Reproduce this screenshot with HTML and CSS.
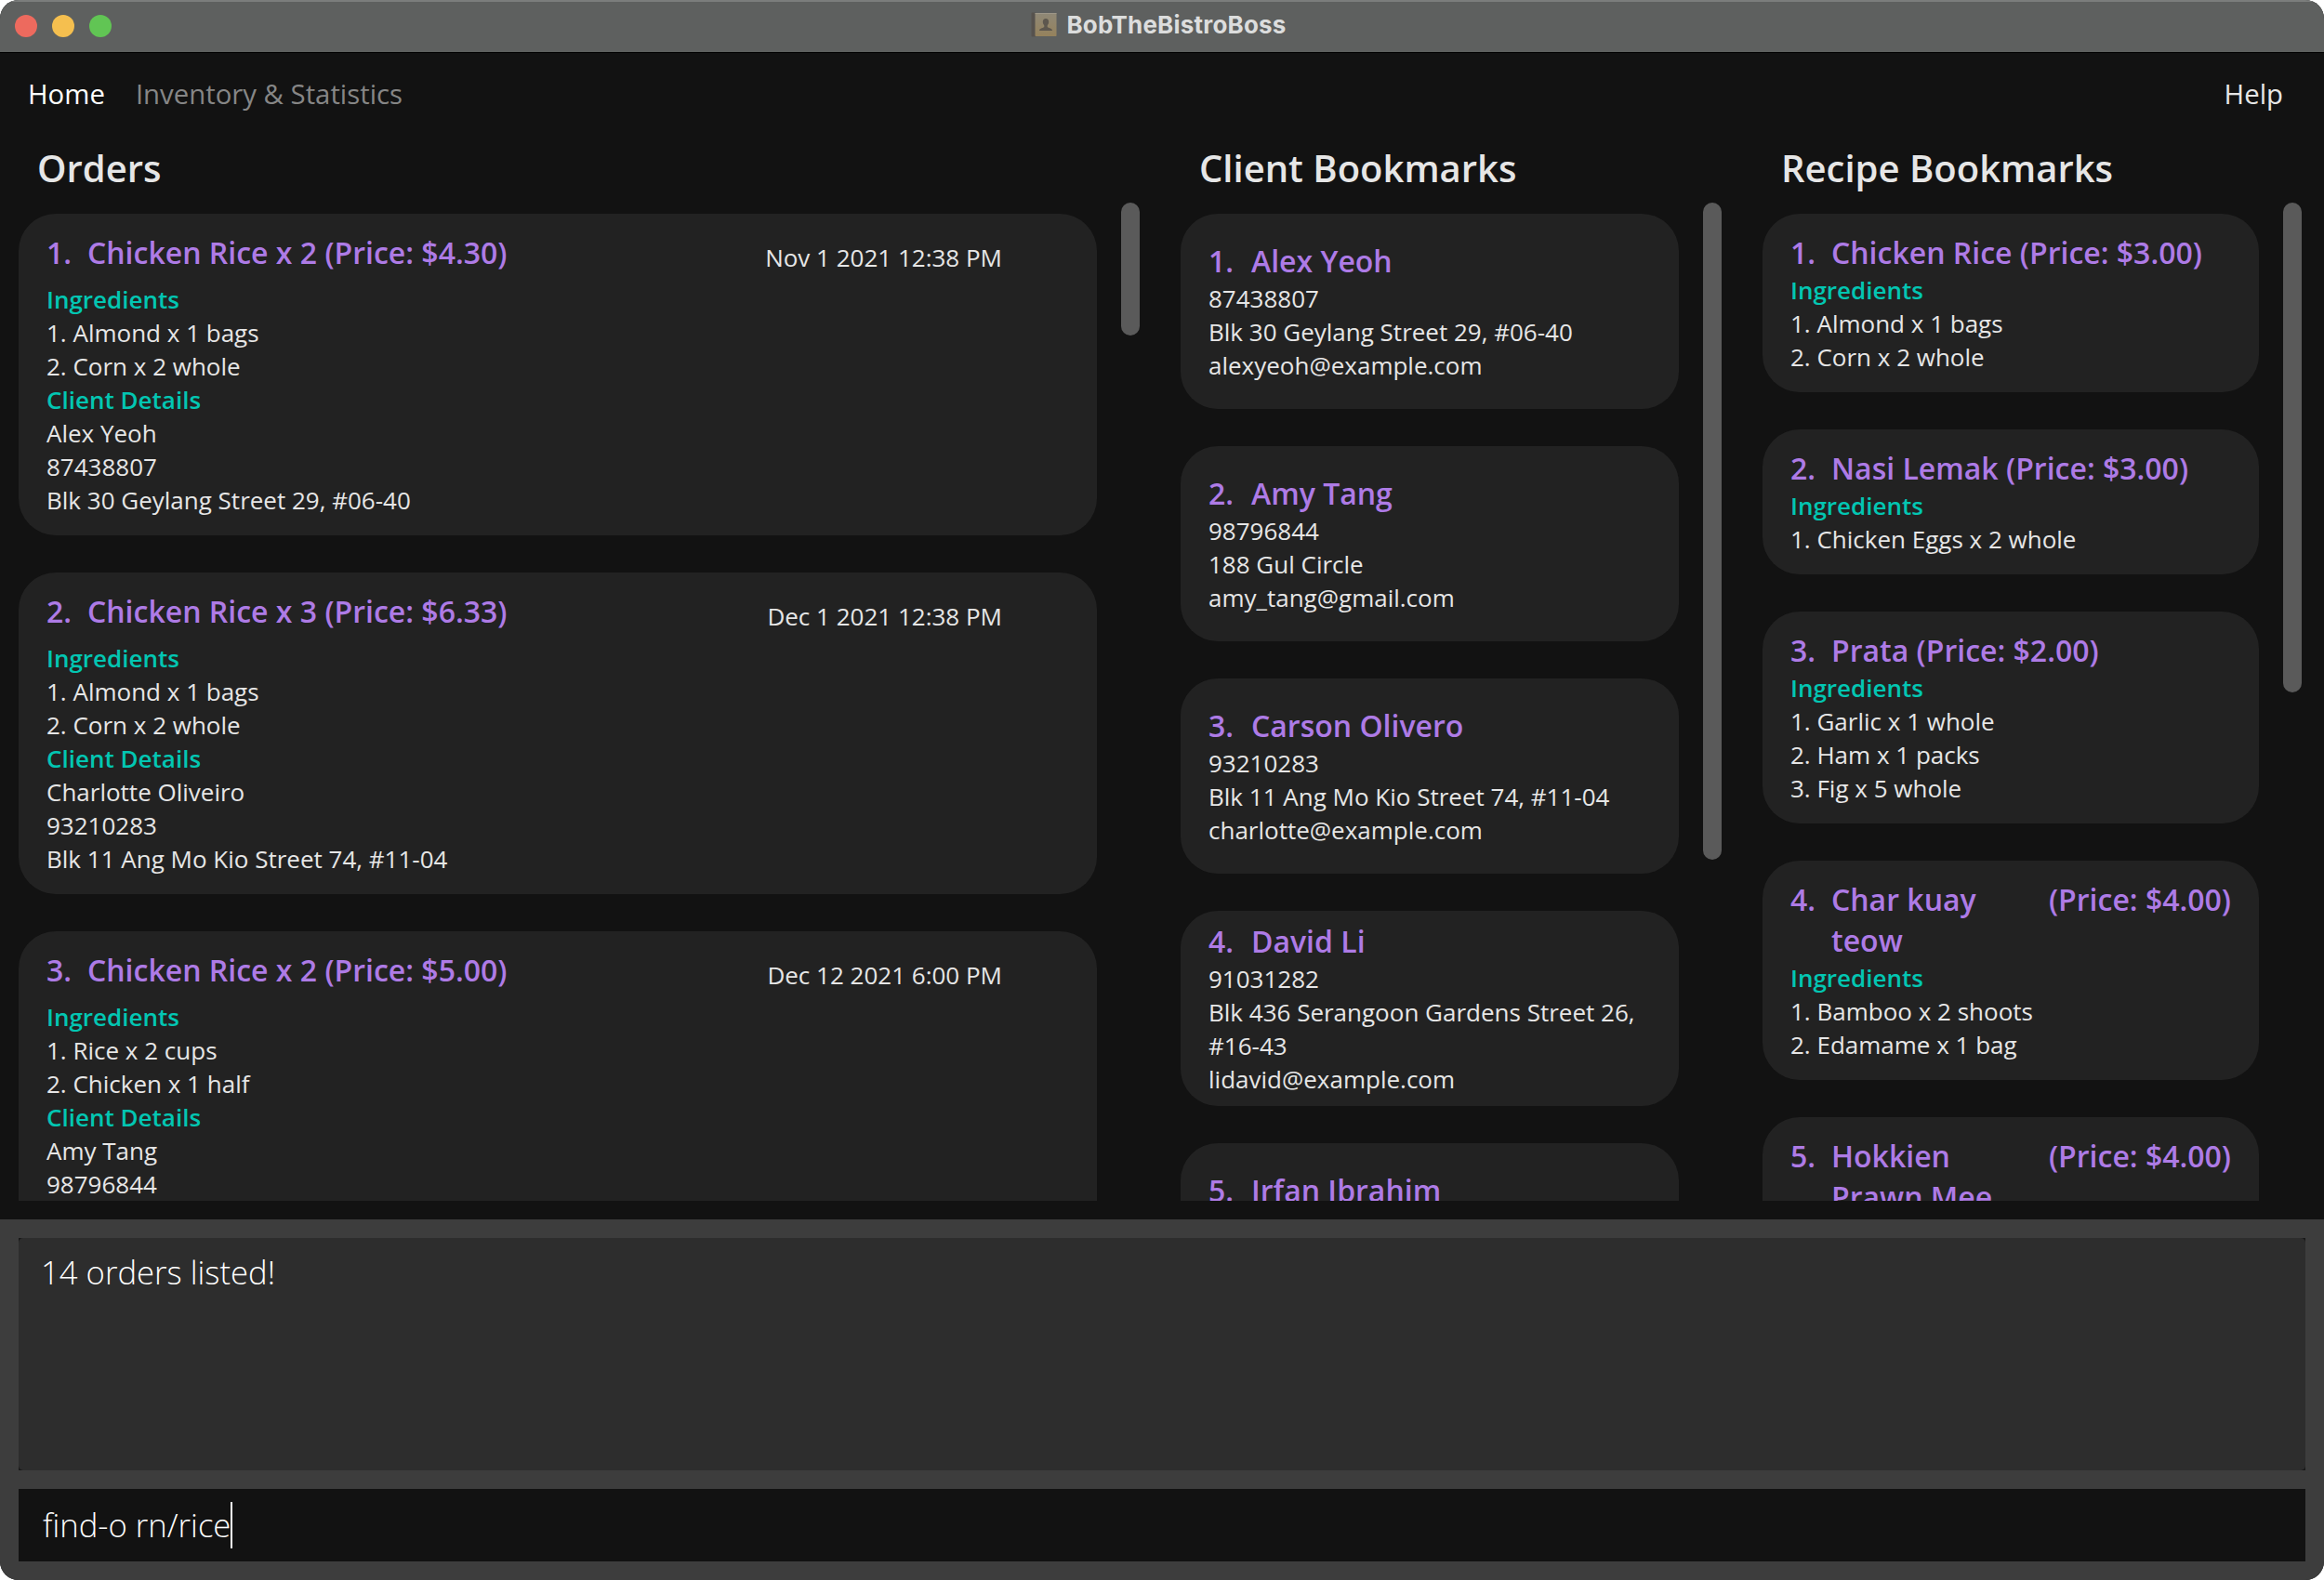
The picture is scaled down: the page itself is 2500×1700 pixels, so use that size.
FILE: index.html
```html
<!DOCTYPE html>
<html lang="en">
<head>
<meta charset="utf-8">
<title>BobTheBistroBoss</title>
<link rel="stylesheet" href="styles.css">
</head>
<body>
<div class="window">
  <header class="titlebar">
    <div class="lights"><span class="light close"></span><span class="light minimise"></span><span class="light maximise"></span></div>
    <div class="app-title">
      <svg class="app-icon" width="28" height="28" viewBox="0 0 28 28">
        <defs>
          <linearGradient id="cover" x1="0" y1="0" x2="0" y2="1"><stop offset="0" stop-color="#8f8877"/><stop offset="1" stop-color="#95825c"/></linearGradient>
        </defs>
        <rect x="0.5" y="0.5" width="5" height="26" rx="1" fill="#56524e"/>
        <rect x="4.5" y="1" width="23" height="25" rx="0.8" fill="url(#cover)"/>
        <rect x="4.5" y="1" width="23" height="1" fill="#9d9788"/>
        <path d="M16 7c2 0 3.200 1.400 3.200 3.600 0 1.700-.8 3-1.500 3.800v1.600c0 .8 5.300 1.200 5.300 4H9c0-2.800 5.300-3.200 5.300-4v-1.600c-.7-.8-1.500-2.100-1.500-3.800C12.800 8.400 14 7 16 7z" fill="#5d574e"/>
      </svg>
      <span>BobTheBistroBoss</span>
    </div>
  </header>

  <nav class="menu">
    <span class="menu-item active">Home</span>
    <span class="menu-item muted">Inventory &amp; Statistics</span>
    <span class="menu-item help">Help</span>
  </nav>

  <main class="content">
    <section class="panel orders">
      <h2>Orders</h2>
      <div class="viewport">
        <div class="list">
          <article class="card">
            <div class="head"><span class="no">1.</span><span class="name">Chicken Rice x 2 (Price: $4.30)</span><span class="date">Nov 1 2021 12:38 PM</span></div>
            <h4>Ingredients</h4><p>1. Almond x 1 bags</p><p>2. Corn x 2 whole</p>
            <h4>Client Details</h4><p>Alex Yeoh</p><p>87438807</p><p>Blk 30 Geylang Street 29, #06-40</p>
          </article>
          <article class="card">
            <div class="head"><span class="no">2.</span><span class="name">Chicken Rice x 3 (Price: $6.33)</span><span class="date">Dec 1 2021 12:38 PM</span></div>
            <h4>Ingredients</h4><p>1. Almond x 1 bags</p><p>2. Corn x 2 whole</p>
            <h4>Client Details</h4><p>Charlotte Oliveiro</p><p>93210283</p><p>Blk 11 Ang Mo Kio Street 74, #11-04</p>
          </article>
          <article class="card">
            <div class="head"><span class="no">3.</span><span class="name">Chicken Rice x 2 (Price: $5.00)</span><span class="date">Dec 12 2021 6:00 PM</span></div>
            <h4>Ingredients</h4><p>1. Rice x 2 cups</p><p>2. Chicken x 1 half</p>
            <h4>Client Details</h4><p>Amy Tang</p><p>98796844</p>
          </article>
        </div>
        <div class="track"><div class="thumb"></div></div>
      </div>
    </section>

    <section class="panel clients">
      <h2>Client Bookmarks</h2>
      <div class="viewport">
        <div class="list">
          <article class="card">
            <div class="head"><span class="no">1.</span><span class="name">Alex Yeoh</span></div>
            <p>87438807</p><p>Blk 30 Geylang Street 29, #06-40</p><p>alexyeoh@example.com</p>
          </article>
          <article class="card">
            <div class="head"><span class="no">2.</span><span class="name">Amy Tang</span></div>
            <p>98796844</p><p>188 Gul Circle</p><p>amy_tang@gmail.com</p>
          </article>
          <article class="card">
            <div class="head"><span class="no">3.</span><span class="name">Carson Olivero</span></div>
            <p>93210283</p><p>Blk 11 Ang Mo Kio Street 74, #11-04</p><p>charlotte@example.com</p>
          </article>
          <article class="card">
            <div class="head"><span class="no">4.</span><span class="name">David Li</span></div>
            <p>91031282</p><p>Blk 436 Serangoon Gardens Street 26, #16-43</p><p>lidavid@example.com</p>
          </article>
          <article class="card partial">
            <div class="head"><span class="no">5.</span><span class="name">Irfan Ibrahim</span></div>
          </article>
        </div>
        <div class="track"><div class="thumb"></div></div>
      </div>
    </section>

    <section class="panel recipes">
      <h2>Recipe Bookmarks</h2>
      <div class="viewport">
        <div class="list">
          <article class="card">
            <div class="head"><span class="no">1.</span><span class="name">Chicken Rice (Price: $3.00)</span></div>
            <h4>Ingredients</h4><p>1. Almond x 1 bags</p><p>2. Corn x 2 whole</p>
          </article>
          <article class="card">
            <div class="head"><span class="no">2.</span><span class="name">Nasi Lemak (Price: $3.00)</span></div>
            <h4>Ingredients</h4><p>1. Chicken Eggs x 2 whole</p>
          </article>
          <article class="card">
            <div class="head"><span class="no">3.</span><span class="name">Prata (Price: $2.00)</span></div>
            <h4>Ingredients</h4><p>1. Garlic x 1 whole</p><p>2. Ham x 1 packs</p><p>3. Fig x 5 whole</p>
          </article>
          <article class="card">
            <div class="head"><span class="no">4.</span><span class="name">Char kuay teow</span><span class="price">(Price: $4.00)</span></div>
            <h4>Ingredients</h4><p>1. Bamboo x 2 shoots</p><p>2. Edamame x 1 bag</p>
          </article>
          <article class="card">
            <div class="head"><span class="no">5.</span><span class="name">Hokkien Prawn Mee</span><span class="price">(Price: $4.00)</span></div>
          </article>
        </div>
        <div class="track"><div class="thumb"></div></div>
      </div>
    </section>
  </main>

  <footer class="console">
    <div class="result-frame"><div class="result">14 orders listed!</div></div>
    <div class="command"><span>find-o rn/rice</span><i class="caret"></i></div>
  </footer>
</div>
</body>
</html>
```
FILE: styles.css
```css
* { box-sizing: border-box; }

body {
  margin: 0;
  background: #fff;
  font-family: "Open Sans", "Noto Sans", sans-serif;
  font-size: 26px;
  line-height: 36px;
  color: #e6e6e6;
}

h2, h4, p { margin: 0; }

.window {
  display: flex;
  flex-direction: column;
  width: 2500px;
  height: 1700px;
  border-radius: 20px;
  overflow: hidden;
  background: #121212;
}

/* Title bar */
.titlebar {
  display: grid;
  grid-template-columns: 1fr auto 1fr;
  align-items: center;
  height: 57px;
  padding: 0 16px;
  background: #5e605f;
  box-shadow: inset 0 2px #7b7d7c;
  border-bottom: 1px solid #000;
}
.lights { display: flex; gap: 16px; }
.light { width: 24px; height: 24px; border-radius: 50%; }
.close { background: #ed6a5e; }
.minimise { background: #f5bf4f; }
.maximise { background: #61c554; }
.app-title {
  display: flex;
  align-items: center;
  gap: 10px;
  padding: 0 7px 3px 0;
  font: 700 26px/32px Inter, "Liberation Sans", sans-serif;
  letter-spacing: 0.2px;
  color: #dcdddd;
}

/* Menu */
.menu {
  display: flex;
  height: 100px;
  padding: 23px 44px 0 30px;
  font-size: 29.33px;
  line-height: 42px;
}
.menu-item { margin-right: 33px; }
.active { color: #fff; }
.muted { color: #868686; }
.help { margin: 0 0 0 auto; }

/* Panels */
.content {
  display: grid;
  grid-template-columns: 1250px 626px 1fr;
  height: 1155px;
  padding: 0 24px 0 20px;
}
h2 {
  height: 61px;
  padding-left: 20px;
  font-size: 40px;
  font-weight: 600;
  line-height: 48px;
}
.viewport {
  display: flex;
  gap: 26px;
  height: 1074px;
  overflow: hidden;
}
.orders { padding-right: 44px; }
.clients { padding-right: 44px; }
.list {
  display: flex;
  flex: 1;
  flex-direction: column;
  gap: 40px;
  padding-top: 12px;
}
.track { width: 20px; }
.thumb { border-radius: 10px; background: #5a5a5a; }
.orders .thumb { height: 143px; }
.clients .thumb { height: 707px; }
.recipes .thumb { height: 527px; }

.card {
  flex: none;
  padding: 20px 30px;
  border-radius: 40px;
  background: #222;
}
.orders .card { height: 346px; }
.orders .head { height: 44px; margin-bottom: 10px; }
.clients .card {
  display: flex;
  flex-direction: column;
  justify-content: center;
  height: 210px;
  padding: 0 30px;
}
.clients .partial { justify-content: flex-start; padding-top: 29px; }
.recipes .card { min-height: 156px; }
.head {
  display: flex;
  font-size: 32px;
  font-weight: 600;
  line-height: 44px;
  color: #ae7be6;
}
.no { flex: none; width: 44px; }
.clients .no { width: 46px; }
.date {
  margin: 9px 72px 0 auto;
  font-size: 26px;
  font-weight: 400;
  line-height: 36px;
  color: #e6e6e6;
}
.price { flex: none; margin-left: auto; }
.head:has(.price) .name { width: 190px; }
h4 { font-size: 26px; font-weight: 600; color: #03c6b2; }

/* Result and command boxes */
.console {
  display: flex;
  flex-direction: column;
  gap: 20px;
  height: 388px;
  padding: 20px;
  background: #3d3d3d;
  font-size: 34.67px;
  font-weight: 300;
  line-height: 50px;
  color: #fff;
}
.result-frame { height: 250px; background: #181818; }
.result { height: 100%; padding: 12px 24px; border-radius: 5px; background: #2d2d2d; }
.command { display: flex; height: 78px; padding: 14px 26px; background: #121212; }
.caret { width: 2px; height: 50px; background: #fff; }
```
